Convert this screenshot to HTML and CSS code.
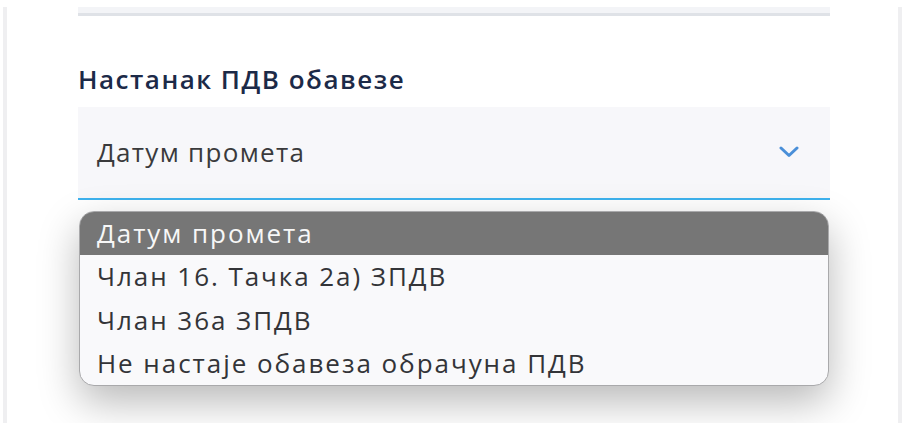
FILE: index.html
```html
<!DOCTYPE html>
<html lang="sr">
<head>
<meta charset="utf-8">
<link rel="stylesheet" href="styles.css">
</head>
<body>
<div class="panel">
  <div class="topbar"></div>
  <label class="field-label">Настанак ПДВ обавезе</label>
  <div class="select">
    <span class="select-value">Датум промета</span>
    <svg class="chevron" width="20" height="12" viewBox="0 0 20 12"><path d="M2 2 L10 9.5 L18 2" fill="none" stroke="#4a8fd8" stroke-width="3" stroke-linecap="round" stroke-linejoin="round"/></svg>
  </div>
  <ul class="options">
    <li class="option active">Датум промета</li>
    <li class="option">Члан 16. Тачка 2а) ЗПДВ</li>
    <li class="option">Члан 36а ЗПДВ</li>
    <li class="option">Не настаје обавеза обрачуна ПДВ</li>
  </ul>
</div>
</body>
</html>
```
FILE: styles.css
```css
html, body {
  margin: 0;
  padding: 0;
  background: #ffffff;
}
body {
  font-family: "Open Sans", "Noto Sans", sans-serif;
}
.panel {
  margin: 7px 2px 0 3px;
  height: 416px;
  box-sizing: border-box;
  border-left: 4px solid #efeff1;
  border-right: 4px solid #efeff1;
  padding: 0 68px 0 71px;
  display: flex;
  flex-direction: column;
}
.topbar {
  height: 6px;
  background: #f3f4f7;
  border-bottom: 3px solid #dfe2e7;
}
.field-label {
  display: block;
  margin-top: 46px;
  font-size: 26px;
  line-height: 34px;
  letter-spacing: 1.5px;
  font-weight: 600;
  color: #1c2a48;
}
.select {
  margin-top: 11px;
  height: 93px;
  box-sizing: border-box;
  background: #f7f7fa;
  border-bottom: 2px solid #3db2ee;
  display: flex;
  align-items: center;
  justify-content: space-between;
  padding: 0 31px 2px 19px;
}
.select-value {
  font-size: 26px;
  line-height: 34px;
  letter-spacing: 1.3px;
  color: #3a3a3c;
}
.chevron {
  display: block;
}
.options {
  list-style: none;
  margin: 11px 1px 0 1px;
  padding: 0;
  background: #f9f9fb;
  border: 1px solid #a9a9ab;
  border-radius: 15px;
  overflow: hidden;
  box-shadow: 0 16px 40px rgba(0, 0, 0, 0.28);
}
.option {
  font-size: 26px;
  line-height: 43.3px;
  letter-spacing: 1.95px;
  padding-left: 17px;
  color: #333438;
}
.option.active {
  background: #767676;
  color: #f7f7f7;
}
```
